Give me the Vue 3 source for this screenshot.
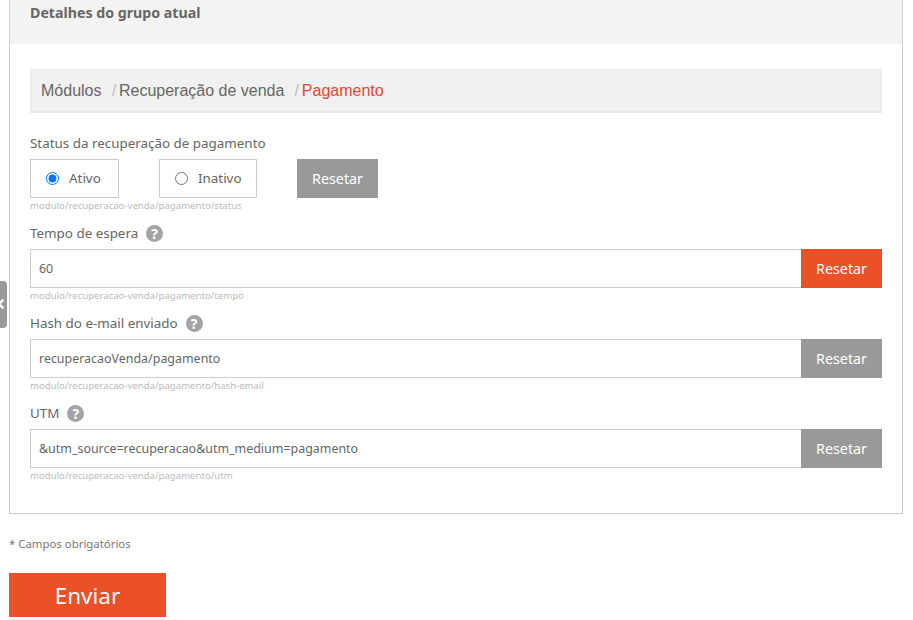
<script setup>
const fields = [
  { label: 'Tempo de espera', value: '60', hint: 'modulo/recuperacao-venda/pagamento/tempo', active: true },
  { label: 'Hash do e-mail enviado', value: 'recuperacaoVenda/pagamento', hint: 'modulo/recuperacao-venda/pagamento/hash-email', active: false },
  { label: 'UTM', value: '&utm_source=recuperacao&utm_medium=pagamento', hint: 'modulo/recuperacao-venda/pagamento/utm', active: false },
]
</script>

<template>
  <div class="page">
    <button class="side-tab" type="button" aria-label="Recolher">
      <svg width="8" height="12" viewBox="0 0 8 12"><path d="M5.5 1.5 1 6l4.500 4.500" fill="none" stroke="#fff" stroke-width="2.4" /></svg>
    </button>
    <section class="card">
      <header class="card-head">Detalhes do grupo atual</header>
      <div class="card-body">
        <nav class="crumbs">
          <span>Módulos</span><i class="sep first">/</i><span>Recuperação de venda</span><i class="sep second">/</i><span class="current">Pagamento</span>
        </nav>

        <div class="field">
          <div class="label">Status da recuperação de pagamento</div>
          <div class="radio-row">
            <label class="radio ativo"><input type="radio" name="status" checked /><span>Ativo</span></label>
            <label class="radio inativo"><input type="radio" name="status" /><span>Inativo</span></label>
            <button class="reset alone" type="button">Resetar</button>
          </div>
          <div class="hint">modulo/recuperacao-venda/pagamento/status</div>
        </div>

        <div v-for="f in fields" :key="f.label" class="field">
          <div class="label">
            {{ f.label }}
            <span class="help">?</span>
          </div>
          <div class="input-row">
            <input class="text" type="text" :value="f.value" />
            <button class="reset" :class="{ active: f.active }" type="button">Resetar</button>
          </div>
          <div class="hint">{{ f.hint }}</div>
        </div>
      </div>
    </section>
    <p class="required">* Campos obrigatórios</p>
    <button class="send" type="button">Enviar</button>
  </div>
</template>

<style scoped>
.page {
  position: relative;
  width: 894px;
  height: 620px;
  padding-left: 9px;
  overflow: hidden;
  font-family: "Noto Sans", sans-serif;
  font-size: 13.4px;
  color: #666;
  background: #fff;
}
.side-tab {
  position: absolute;
  left: 0;
  top: 281px;
  width: 7px;
  height: 47px;
  padding: 0;
  border: 0;
  border-radius: 0 4px 4px 0;
  background: #999;
  overflow: hidden;
}
.side-tab svg {
  position: absolute;
  left: -2px;
  top: 17px;
}
.card {
  width: 892px;
  border: 1px solid #ccc;
  border-top: 0;
}
.card-head {
  height: 44px;
  padding: 4px 20px 0;
  box-sizing: border-box;
  background: #f3f3f3;
  font-size: 14.2px;
  font-weight: 700;
  line-height: 18px;
  color: #666;
}
.card-body {
  padding: 25px 20px 20px;
}
.crumbs {
  display: flex;
  align-items: center;
  box-sizing: border-box;
  height: 44px;
  margin-bottom: 20px;
  padding-left: 10px;
  background: #f1f1f1;
  border: 1px solid #e9e9e9;
  border-bottom-width: 2px;
  font-family: "Liberation Sans", sans-serif;
  font-size: 16px;
  color: #666;
}
.sep {
  font-style: normal;
  color: #bbb;
}
.sep.first {
  margin: 0 2.500px 0 10.500px;
}
.sep.second {
  margin: 0 3px 0 10px;
}
.current {
  color: #e8452f;
}
.field {
  margin-bottom: 9px;
}
.label {
  display: flex;
  align-items: center;
  gap: 8px;
  height: 20px;
  margin-bottom: 6px;
  line-height: 20px;
  white-space: nowrap;
}
.help {
  display: inline-flex;
  align-items: center;
  justify-content: center;
  width: 17px;
  height: 17px;
  border-radius: 50%;
  background: #a3a3a3;
  color: #fff;
  font-size: 14px;
  font-weight: 700;
  line-height: 17px;
}
.radio-row {
  display: flex;
  gap: 40px;
  height: 39px;
}
.radio {
  display: flex;
  align-items: center;
  box-sizing: border-box;
  border: 1px solid #ccc;
  padding-left: 15px;
}
.radio.ativo {
  width: 89px;
}
.radio.inativo {
  width: 98px;
}
.radio input {
  width: 13px;
  height: 13px;
  margin: 0 10px 0 0;
}
.radio span {
  margin-bottom: 2px;
}
.input-row {
  display: flex;
  height: 39px;
}
.text {
  flex: 1;
  min-width: 0;
  box-sizing: border-box;
  height: 39px;
  padding: 0 8px;
  border: 1px solid #ccc;
  border-right: 0;
  outline: 0;
  font: inherit;
  font-size: 12.45px;
  color: #666;
}
.reset {
  width: 81px;
  height: 39px;
  padding: 0;
  border: 0;
  background: #999;
  color: #fff;
  font: inherit;
  font-size: 14.3px;
}
.reset.active {
  background: #ea5127;
}
.hint {
  height: 16px;
  font-size: 9.600px;
  line-height: 15px;
  color: #bbb;
  white-space: nowrap;
}
.required {
  margin: 23px 0 22px;
  font-size: 11.400px;
  line-height: 14px;
  color: #777;
}
.send {
  display: block;
  width: 157px;
  height: 44px;
  padding: 0;
  border: 0;
  background: #ea5127;
  color: #fff;
  font-family: "Noto Sans", sans-serif;
  font-size: 22.500px;
}
</style>
